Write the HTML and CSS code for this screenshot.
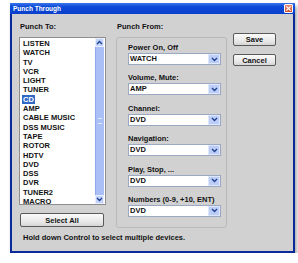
FILE: index.html
```html
<!DOCTYPE html>
<html lang="en">
<head>
    <meta charset="UTF-8">
    <title>Punch Through</title>
    <link rel="stylesheet" href="styles.css">
</head>
<body>
    <div class="window">
        <div class="titlebar">
            <span class="title">Punch Through</span>
            <span class="close">
                <svg width="8" height="8" viewBox="0 0 8 8"><path d="M1.5 1.5 L6.5 6.5 M6.5 1.5 L1.5 6.5" stroke="#fff" stroke-width="1.4" /></svg>
            </span>
        </div>
        <div class="content">
            <div class="main">
                <div class="col-to">
                    <div class="heading">Punch To:</div>
                    <div class="listbox">
                        <ul class="items">
                            <li>LISTEN</li>
                            <li>WATCH</li>
                            <li>TV</li>
                            <li>VCR</li>
                            <li>LIGHT</li>
                            <li>TUNER</li>
                            <li><span class="selected">CD</span></li>
                            <li>AMP</li>
                            <li>CABLE MUSIC</li>
                            <li>DSS MUSIC</li>
                            <li>TAPE</li>
                            <li>ROTOR</li>
                            <li>HDTV</li>
                            <li>DVD</li>
                            <li>DSS</li>
                            <li>DVR</li>
                            <li>TUNER2</li>
                            <li>MACRO</li>
                        </ul>
                        <div class="scrollbar">
                            <div class="scroll-btn">
                                <svg width="7" height="5" viewBox="0 0 7 5"><path d="M1 4 L3.5 1.5 L6 4" fill="none" stroke="#1d3f8f" stroke-width="1.3" /></svg>
                            </div>
                            <div class="scroll-thumb"><span class="grip"></span></div>
                            <div class="scroll-btn">
                                <svg width="7" height="5" viewBox="0 0 7 5"><path d="M1 1 L3.5 3.5 L6 1" fill="none" stroke="#1d3f8f" stroke-width="1.3" /></svg>
                            </div>
                        </div>
                    </div>
                    <button class="btn btn-wide">Select All</button>
                </div>

                <div class="col-from">
                    <div class="heading">Punch From:</div>
                    <div class="groupbox">
                        <div class="field">
                            <div class="field-label">Power On, Off</div>
                            <div class="select"><span class="value">WATCH</span><span class="arrow"><svg width="7" height="5" viewBox="0 0 7 5"><path d="M1 1 L3.5 3.5 L6 1" fill="none" stroke="#1d3f8f" stroke-width="1.3" /></svg></span></div>
                        </div>
                        <div class="field">
                            <div class="field-label">Volume, Mute:</div>
                            <div class="select"><span class="value">AMP</span><span class="arrow"><svg width="7" height="5" viewBox="0 0 7 5"><path d="M1 1 L3.5 3.5 L6 1" fill="none" stroke="#1d3f8f" stroke-width="1.3" /></svg></span></div>
                        </div>
                        <div class="field">
                            <div class="field-label">Channel:</div>
                            <div class="select"><span class="value">DVD</span><span class="arrow"><svg width="7" height="5" viewBox="0 0 7 5"><path d="M1 1 L3.5 3.5 L6 1" fill="none" stroke="#1d3f8f" stroke-width="1.3" /></svg></span></div>
                        </div>
                        <div class="field">
                            <div class="field-label">Navigation:</div>
                            <div class="select"><span class="value">DVD</span><span class="arrow"><svg width="7" height="5" viewBox="0 0 7 5"><path d="M1 1 L3.5 3.5 L6 1" fill="none" stroke="#1d3f8f" stroke-width="1.3" /></svg></span></div>
                        </div>
                        <div class="field">
                            <div class="field-label">Play, Stop, ...</div>
                            <div class="select"><span class="value">DVD</span><span class="arrow"><svg width="7" height="5" viewBox="0 0 7 5"><path d="M1 1 L3.5 3.5 L6 1" fill="none" stroke="#1d3f8f" stroke-width="1.3" /></svg></span></div>
                        </div>
                        <div class="field">
                            <div class="field-label">Numbers (0-9, +10, ENT)</div>
                            <div class="select"><span class="value">DVD</span><span class="arrow"><svg width="7" height="5" viewBox="0 0 7 5"><path d="M1 1 L3.5 3.5 L6 1" fill="none" stroke="#1d3f8f" stroke-width="1.3" /></svg></span></div>
                        </div>
                    </div>
                </div>

                <div class="col-actions">
                    <button class="btn btn-save">Save</button>
                    <button class="btn btn-cancel">Cancel</button>
                </div>
            </div>
            <div class="hint">Hold down Control to select multiple devices.</div>
        </div>
    </div>
</body>
</html>
```

FILE: styles.css
```css
body {
    margin: 0;
    background: #fff;
    font-family: "Liberation Sans", Arial, sans-serif;
    font-size: 7.5px;
    font-weight: bold;
    color: #111;
}
.window {
    margin: 3px 0 0 10px;
    width: 285px;
    height: 250px;
    box-sizing: border-box;
    background: #d1d1d1;
    border: 2px solid #0a2a9c;
    border-top: 0;
    box-shadow: 2px 3px 4px rgba(0, 0, 0, 0.35);
}
.titlebar {
    margin: 0 -2px;
    height: 11px;
    display: flex;
    align-items: center;
    justify-content: space-between;
    padding: 0 2px 0 3px;
    background: linear-gradient(#3b74ea, #0b4ad8 35%, #0a40cc);
}
.title {
    color: #fff;
    font-size: 6.5px;
    line-height: 11px;
}
.close {
    width: 9px;
    height: 9px;
    box-sizing: border-box;
    border: 1px solid #fff;
    border-radius: 1px;
    background: linear-gradient(#e88a6c, #d2502e);
    display: flex;
    align-items: center;
    justify-content: center;
}
.close svg {
    display: block;
    width: 7px;
    height: 7px;
}
.content {
    padding: 8px 0 0 7px;
}
.main {
    display: flex;
}
.heading {
    line-height: 10px;
    margin-bottom: 5px;
    padding-left: 1px;
}
.col-to {
    width: 87px;
}
.listbox {
    height: 168px;
    box-sizing: border-box;
    border: 1px solid #8e8e8e;
    background: #fff;
    display: flex;
}
.items {
    flex: 1;
    list-style: none;
    margin: 0;
    padding: 1px 0 0 3px;
}
.items li {
    line-height: 9.3px;
    height: 9.3px;
    white-space: nowrap;
}
.selected {
    background: #3169c6;
    color: #fff;
    padding: 0 1px;
    margin-left: -1px;
}
.scrollbar {
    width: 9px;
    display: flex;
    flex-direction: column;
    background: #eef0fb;
    margin-right: 1px;
}
.scroll-btn {
    height: 9px;
    display: flex;
    align-items: center;
    justify-content: center;
    background: #c2d2fa;
    border: 1px solid #e8eefc;
    box-sizing: border-box;
}
.scroll-thumb {
    flex: 1;
    background: #a9bff5;
    border-left: 1px solid #8fa9ee;
    display: flex;
    align-items: center;
    justify-content: center;
}
.grip {
    width: 4px;
    height: 4px;
    border-top: 1px solid #e2eafd;
    border-bottom: 1px solid #e2eafd;
}
.btn {
    display: block;
    font-family: inherit;
    font-size: 7.5px;
    font-weight: bold;
    color: #111;
    padding: 0;
    border: 1px solid #5a5a5a;
    border-radius: 2px;
    background: linear-gradient(#fbfbfb, #e6e6e6 70%, #d4d4d4);
}
.btn-wide {
    margin: 8px 0 0 1px;
    width: 84px;
    height: 14px;
}
.col-from {
    width: 111px;
    margin-left: 10px;
}
.groupbox {
    height: 191px;
    box-sizing: border-box;
    border: 1px solid #b9b9b9;
    border-radius: 3px;
    padding: 5px 0 0 11px;
}
.field {
    margin-bottom: 8.4px;
}
.field-label {
    line-height: 10px;
}
.select {
    width: 93px;
    height: 12px;
    box-sizing: border-box;
    border: 1px solid #9aa8c4;
    background: #fff;
    display: flex;
    align-items: center;
    justify-content: space-between;
}
.value {
    padding-left: 1px;
    line-height: 10px;
}
.arrow {
    width: 12px;
    height: 10px;
    box-sizing: border-box;
    border: 1px solid #dfe7fc;
    background: #bccdf8;
    display: flex;
    align-items: center;
    justify-content: center;
}
.col-actions {
    width: 43px;
    margin-left: 6px;
    padding-top: 11px;
}
.btn-save {
    width: 43px;
    height: 13px;
}
.btn-cancel {
    width: 43px;
    height: 12px;
    margin-top: 8px;
}
.hint {
    margin-top: 5px;
    padding-left: 4px;
    line-height: 10px;
}
```
